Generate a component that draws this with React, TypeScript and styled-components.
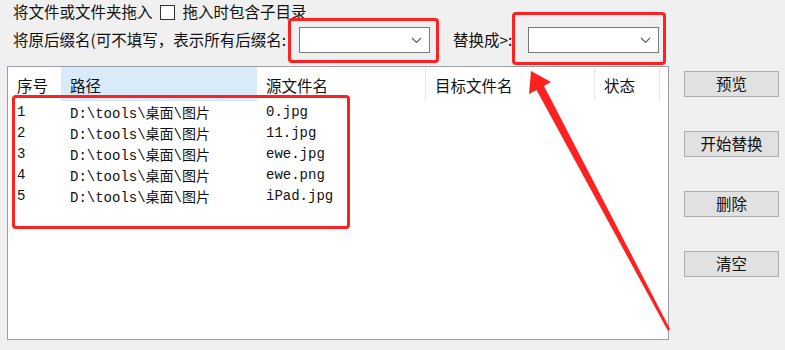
import React from "react";
import styled, {createGlobalStyle} from "styled-components";

const GlobalStyle = createGlobalStyle`
  html, body {
    margin: 0;
    padding: 0;
    background: #f0f0f0;
  }
  body {
    font-family: "Noto Sans CJK SC", "Noto Sans", sans-serif;
    font-size: 15.5px;
    color: #111;
  }
`

const Page = styled.div`
  position: relative;
  width: 785px;
  height: 350px;
  overflow: hidden;
  background: #f0f0f0;
`

const TopRow = styled.div`
  display: flex;
  align-items: center;
  height: 24px;
  padding-left: 13px;
  line-height: 1;
`

const CheckBox = styled.span`
  display: inline-block;
  box-sizing: border-box;
  width: 15px;
  height: 15px;
  margin: 0 8px 0 7px;
  border: 1px solid #333;
  background: #fff;
`

const FilterRow = styled.div`
  display: flex;
  align-items: center;
  height: 32px;
  padding-left: 13px;
  line-height: 1;
`

const Label = styled.span<{ $width?: number; $gap?: number }>`
  white-space: nowrap;
  flex-shrink: 0;
  ${props => props.$width ? `width: ${props.$width}px;` : ''}
  margin-left: ${props => props.$gap ?? 0}px;
`

const Combo = styled.div<{ $gap: number }>`
  position: relative;
  box-sizing: border-box;
  width: 131px;
  height: 26px;
  flex-shrink: 0;
  margin-left: ${props => props.$gap}px;
  background: #fff;
  border: 1px solid #7a7a7a;
`

const Chevron = styled.svg`
  position: absolute;
  right: 7px;
  top: 9px;
`

const Main = styled.div`
  display: flex;
  align-items: flex-start;
  margin-top: 10px;
  padding-left: 7px;
`

const ListBox = styled.div`
  box-sizing: border-box;
  width: 662px;
  height: 274px;
  background: #fff;
  border: 1px solid #9a9ea6;
`

const HeaderRow = styled.div`
  display: flex;
  height: 34px;
`

const HeaderCell = styled.div<{ $w: number; $hot?: boolean; $sep?: boolean }>`
  box-sizing: border-box;
  width: ${props => props.$w}px;
  height: 100%;
  padding-left: 9px;
  display: flex;
  align-items: center;
  padding-top: 2px;
  background: ${props => props.$hot ? '#d9ebf9' : 'transparent'};
  border-right: 1px solid ${props => props.$sep ? '#e5e5e5' : 'transparent'};
  white-space: nowrap;
`

const DataRow = styled.div`
  box-sizing: border-box;
  display: flex;
  height: 21px;
  align-items: center;
  font-family: "Liberation Mono", "Noto Sans CJK SC", monospace;
  font-size: 14px;
  color: #111;
`

const DataCell = styled.div<{ $w: number }>`
  box-sizing: border-box;
  width: ${props => props.$w}px;
  padding-left: 9px;
  white-space: nowrap;
`

const ButtonColumn = styled.div`
  display: flex;
  flex-direction: column;
  gap: 34px;
  margin-left: 15px;
  margin-top: 5px;
`

const Button = styled.div`
  box-sizing: border-box;
  width: 95px;
  height: 26px;
  display: flex;
  align-items: center;
  justify-content: center;
  background: #e1e1e1;
  border: 1px solid #adadad;
  line-height: 1;
`

const Mark = styled.div<{ $x: number; $y: number; $w: number; $h: number }>`
  position: absolute;
  left: ${props => props.$x}px;
  top: ${props => props.$y}px;
  width: ${props => props.$w}px;
  height: ${props => props.$h}px;
  box-sizing: border-box;
  border: 3px solid #ff2020;
  border-radius: 4px;
  pointer-events: none;
`

const Overlay = styled.svg`
  position: absolute;
  left: 0;
  top: 0;
  pointer-events: none;
`

const columns = [
  {title: '序号', w: 53},
  {title: '路径', w: 196, hot: true},
  {title: '源文件名', w: 169, sep: true},
  {title: '目标文件名', w: 169, sep: true},
  {title: '状态', w: 65, sep: true},
]

const files = [
  {n: '1', path: 'D:\\tools\\桌面\\图片', name: '0.jpg'},
  {n: '2', path: 'D:\\tools\\桌面\\图片', name: '11.jpg'},
  {n: '3', path: 'D:\\tools\\桌面\\图片', name: 'ewe.jpg'},
  {n: '4', path: 'D:\\tools\\桌面\\图片', name: 'ewe.png'},
  {n: '5', path: 'D:\\tools\\桌面\\图片', name: 'iPad.jpg'},
]

const ComboBox = ({gap}: { gap: number }) =>
  <Combo $gap={gap}>
    <Chevron width="11" height="7" viewBox="0 0 11 7">
      <path d="M1 1l4.5 4.5L10 1" fill="none" stroke="#606060" strokeWidth="1.2"/>
    </Chevron>
  </Combo>

export default function App() {
  return <>
    <GlobalStyle/>
    <Page>
      <TopRow>
        <span>将文件或文件夹拖入</span>
        <CheckBox/>
        <span>拖入时包含子目录</span>
      </TopRow>
      <FilterRow>
        <Label $width={286}>将原后缀名(可不填写，表示所有后缀名:</Label>
        <ComboBox gap={0}/>
        <Label $width={75} $gap={23}>替换成&gt;:</Label>
        <ComboBox gap={0}/>
      </FilterRow>
      <Main>
        <ListBox>
          <HeaderRow>
            {columns.map(col =>
              <HeaderCell key={col.title} $w={col.w} $hot={col.hot} $sep={col.sep}>{col.title}</HeaderCell>
            )}
          </HeaderRow>
          {files.map(file =>
            <DataRow key={file.n}>
              <DataCell $w={53}>{file.n}</DataCell>
              <DataCell $w={196}>{file.path}</DataCell>
              <DataCell $w={169}>{file.name}</DataCell>
            </DataRow>
          )}
        </ListBox>
        <ButtonColumn>
          <Button>预览</Button>
          <Button>开始替换</Button>
          <Button>删除</Button>
          <Button>清空</Button>
        </ButtonColumn>
      </Main>

      <Mark $x={288} $y={18} $w={151} $h={45}/>
      <Mark $x={512} $y={12} $w={154} $h={53}/>
      <Mark $x={12} $y={95} $w={338} $h={134}/>
      <Overlay width="785" height="350" viewBox="0 0 785 350">
        <polygon
          points="531,71 551,82 544,86 670,329 668,331 536.5,90 529,94"
          fill="#ff2020"/>
      </Overlay>
    </Page>
  </>
}
